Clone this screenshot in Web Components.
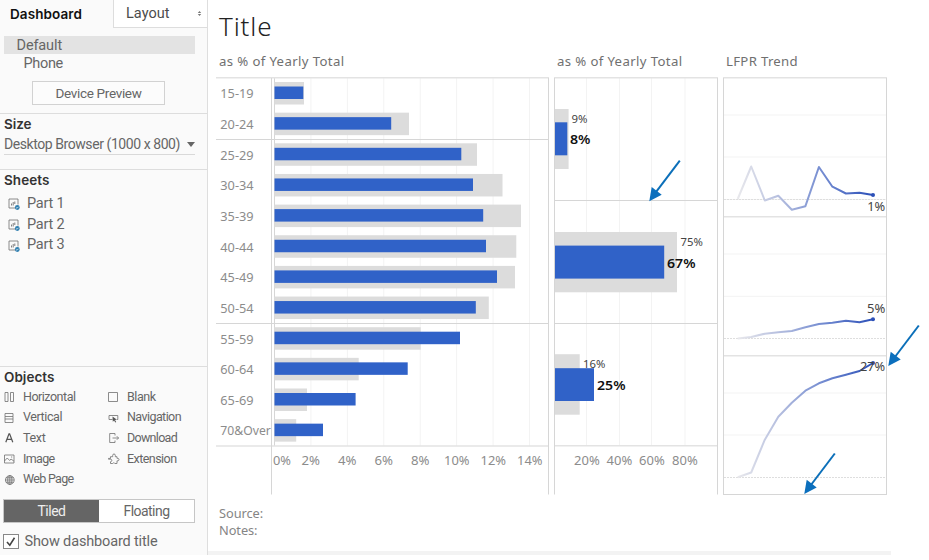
<!DOCTYPE html>
<html lang="en">
<head>
<meta charset="utf-8">
<title>Dashboard</title>
<style>
html,body{margin:0;width:929px;height:560px;overflow:hidden;background:#fff}
body{font-family:"Noto Sans","Open Sans",sans-serif;color:#555}
</style>
</head>
<body>
<dash-app></dash-app>
<script>
// Text that spreads its letters to fill the given width.
class FitText extends HTMLElement{
  connectedCallback(){
    const r=this.attachShadow({mode:'open'});
    r.innerHTML='<style>:host{display:inline-block;white-space:nowrap;line-height:1}span{display:inline-block}</style><span><slot></slot></span>';
    const w=+this.getAttribute('w'),s=r.querySelector('span'),n=this.textContent.length;
    if(w&&n){const d=(w-s.getBoundingClientRect().width)/n;s.style.letterSpacing=d.toFixed(3)+'px';this.style.width=w+'px';}
  }
}
customElements.define('fit-text',FitText);

const ICONS={
 horizontal:'<path d="M1 1.500h3v9H1zM6.500 1.500h3v9h-3z"/>',
 vertical:'<path d="M1 1.500h8v3H1zM1 7h8v3.500H1zM1 4.500v2.500M9 4.500v2.500"/>',
 text:'<path stroke-width="1.25" stroke="#555" d="M1.800 10.300L5 1.800h.6l3.200 8.500M3 7.300h4.600"/>',
 image:'<path d="M.5 2h9.500v8H.5zM.5 8l2.700-3 2.500 2.500L7 6l3 2.200M7 4h1.200"/>',
 web:'<circle cx="5.800" cy="6" r="4.400"/><ellipse cx="5.800" cy="6" rx="2.100" ry="4.400"/><path d="M1.400 6h8.800M2 3.800h7.600M2 8.200h7.600M5.800 1.500v9"/>',
 blank:'<path d="M.5 1.500h9v9h-9z"/>',
 nav:'<path d="M4.500 7.500H1v-4h8.800v4H8.700"/><path fill="#555" stroke="none" d="M4.500 4.600l4.200 3-1.700.4 1.200 1.900-.9.6-1.200-2-1.300 1.200z"/>',
 download:'<path d="M7 3.500v-2H1.700v9H7v-2M4.500 6h6M8.800 4.200L10.600 6 8.800 7.800"/>',
 extension:'<path d="M2.500 3.700h2.200V2.300a1.300 1.300 0 0 1 2.600 0v1.400H9v1.700h.8a1.200 1.200 0 0 1 0 2.400H9v2.700H6.900a1.200 1.200 0 0 0-2.200 0H2.500V8.700h.4a1.300 1.300 0 0 0 0-2.500H.5V5.400h2z"/>',
 sheet:'<path d="M8 10H1V1h9v5.500"/><path d="M3.500 5.500v2M5.200 4v3.500M6.800 3.500v2.500" stroke-width=".9"/><circle cx="9.300" cy="9.500" r="2.400" fill="#2f7fb0" stroke="none"/><path d="M8.200 9.500l.8.800 1.400-1.500" stroke="#fff" stroke-width=".7"/>'
};
class UiIcon extends HTMLElement{
  connectedCallback(){
    this.attachShadow({mode:'open'}).innerHTML=`<style>:host{display:block;width:12px;height:12px}svg{display:block;overflow:visible;fill:none;stroke:#707070;stroke-width:.8}</style><svg width="12" height="12" viewBox="0 0 12 12">${ICONS[this.getAttribute('name')]}</svg>`;
  }
}
customElements.define('ui-icon',UiIcon);

class SideBar extends HTMLElement{
  connectedCallback(){
    const item=([i,t,w])=>`<div class="item"><ui-icon name="${i}"></ui-icon><fit-text w="${w}">${t}</fit-text></div>`;
    this.attachShadow({mode:'open'}).innerHTML=`<style>
    :host{display:flex;flex-direction:column;box-sizing:border-box;width:208px;height:555px;background:#fafafa;border-right:1px solid #dedede;font-family:Roboto,"Noto Sans",sans-serif;font-size:14.500px;color:#666}
    *{box-sizing:border-box}
    .tabs{display:flex;height:28px;flex:none}
    .on{width:113px;padding:6px 0 0 10px;font:600 13.500px Inter,sans-serif;color:#111}
    .off{flex:1;background:#fff;border-left:1px solid #ddd;border-bottom:1px solid #ddd;display:flex;padding:7px 5px 0 12px;justify-content:space-between;color:#4c4c4c}
    .off svg{margin-top:3px}
    .dev{padding:8px 12px 0 4px;height:85px;flex:none}
    .sel{background:#e3e3e3;height:18px;padding:1px 0 0 12.500px}
    .ph{height:19px;padding:1px 0 0 19.500px}
    .btn{margin:8px 0 0 28px;width:133px;height:24px;border:1px solid #d2d2d2;background:#fcfcfc;display:flex;align-items:center;justify-content:center;padding-top:1px;font-size:13.500px}
    section{border-top:1px solid #ddd;padding:4px 12px 0 4px;flex:none}
    h3{margin:0;font:600 13.500px/1 Inter,sans-serif;color:#333;height:19px}
    .size{height:56px}
    .size h3{height:18px}
    .pick{display:flex;justify-content:space-between;height:19px;border-bottom:1px solid #d9d9d9;padding-top:1px;font-size:14px}
    .pick i{margin:5px 0 0;border:4px solid transparent;border-top:5px solid #666;border-bottom:0;height:5px}
    .sheets{height:197px}
    .sheet{display:flex;align-items:center;height:20.700px;padding-left:4px;gap:7px}
    .sheets h3{height:20px}
    .objects{height:132px;padding:4px 0 0 4px}
    .objects h3{height:15.500px}
    .grid{display:grid;grid-template-columns:104px 1fr;grid-auto-rows:20.700px;font-size:12.500px}
    .item{display:flex;align-items:center;gap:7px}
    .toggle{display:flex;margin:1px 12px 0 3px;height:24px;border:1px solid #c6c6c6;flex:none;font-size:14px}
    .toggle div{flex:1;display:flex;align-items:center;justify-content:center;background:#fff}
    .toggle .dark{background:#656565;color:#eee}
    .check{display:flex;align-items:center;gap:5.500px;padding:10px 0 0 3px}
    .check svg{display:block}
    .check fit-text{margin-top:2px}
    </style>
    <div class="tabs"><div class="on"><fit-text w="72">Dashboard</fit-text></div><div class="off"><fit-text w="43.500">Layout</fit-text><svg width="5" height="8" viewBox="0 0 5 8"><path d="M2.500 1L4.200 3H.8zM2.500 6L.8 4h3.400z" fill="#777"/></svg></div></div>
    <div class="dev"><div class="sel"><fit-text w="45.500">Default</fit-text></div><div class="ph"><fit-text w="39.500">Phone</fit-text></div><div class="btn"><fit-text w="86">Device Preview</fit-text></div></div>
    <section class="size"><h3><fit-text w="27.500">Size</fit-text></h3><div class="pick"><fit-text w="176">Desktop Browser (1000 x 800)</fit-text><i></i></div></section>
    <section class="sheets"><h3><fit-text w="45.500">Sheets</fit-text></h3>${[1,2,3].map(n=>`<div class="sheet"><ui-icon name="sheet"></ui-icon><fit-text w="37.500">Part ${n}</fit-text></div>`).join('')}</section>
    <section class="objects"><h3><fit-text w="50.500">Objects</fit-text></h3><div class="grid">${[['horizontal','Horizontal',52.5],['blank','Blank',28.5],['vertical','Vertical',39],['nav','Navigation',54],['text','Text',22.5],['download','Download',50],['image','Image',31.5],['extension','Extension',49.5],['web','Web Page',50.5]].map(item).join('')}</div></section>
    <div class="toggle"><div class="dark"><fit-text w="28">Tiled</fit-text></div><div><fit-text w="46">Floating</fit-text></div></div>
    <div class="check"><svg width="16" height="15"><rect x=".5" y=".5" width="15" height="14" fill="#fff" stroke="#888"/><path d="M4 8l2.800 3.200L11.500 3.800" fill="none" stroke="#444" stroke-width="1.600"/></svg><fit-text w="133">Show dashboard title</fit-text></div>`;
  }
}
customElements.define('side-bar',SideBar);

// Panel: heading above a plot whose coordinates share the canvas origin.
class ChartPanel extends HTMLElement{
  connectedCallback(){
    const x=+this.getAttribute('x'),w=+this.getAttribute('width');
    this.attachShadow({mode:'open'}).innerHTML=`<style>
    :host{display:block;width:${w}px;flex:none}
    header{height:24px;box-sizing:border-box;padding:1.500px 0 0 3px;font-size:13.200px;line-height:1;color:#707070}
    svg{display:block;overflow:visible}
    text{font-family:"Noto Sans","Open Sans",sans-serif;font-size:12.500px;fill:#8c8c8c}
    .b{stroke:#d6d6d6}.t{stroke:#e3e3e3;stroke-width:1.600}.g{stroke:#f3f3f3}
    .z{stroke:#dedede;stroke-dasharray:2 1}
    .gray{fill:#dcdcdc}.blue{fill:#3062c8}
    </style><header><fit-text w="${this.getAttribute('head-width')}">${this.getAttribute('heading')}</fit-text></header>
    <svg width="${w}" height="418" viewBox="${x} 77 ${w} 418">${this.plot()}</svg>`;
  }
}
const L=(c,a,b,d,e)=>`<path class="${c}" d="M${a} ${b}L${d} ${e}"/>`;
const R=(c,x1,y,x2,h)=>`<rect class="${c}" x="${x1}" y="${y}" width="${x2-x1}" height="${h}"/>`;
const T=(x,y,w,t,s='')=>`<text x="${x}" y="${y}" textLength="${w}" lengthAdjust="spacingAndGlyphs" style="${s}">${t}</text>`;

customElements.define('age-chart',class extends ChartPanel{
  plot(){
    const names=['15-19','20-24','25-29','30-34','35-39','40-44','45-49','50-54','55-59','60-64','65-69','70&amp;Over'];
    const g=[304,409,477,502.5,521,516.3,515,488.8,420.7,358.7,307,296.2];
    const b=[303.3,391.2,461.3,473,483.2,486,497,475.8,460,407.7,355.6,323];
    let o='';
    for(let i=1;i<8;i++)o+=L('g',274.5+i*36.43,78,274.5+i*36.43,446);
    o+=L('b',274.5,78,274.5,446);
    names.forEach((n,i)=>{const y=i*30.65;
      o+=R('gray',274.5,82+y,g[i],22.5)+R('blue',274.5,86.5+y,b[i],12.5)+T(220.3,98.300+y,i==11?50.5:33.3,n,'font-size:12.800px');});
    o+=L('t',216,77.8,549,77.8)+L('b',216,139.5,548,139.5)+L('b',216,323.5,548,323.5)+L('t',216,446,548,446)+L('b',271.5,78,271.5,494.5)+L('b',548.5,78,548.5,494.5);
    o+=[[273,18],[301.5,18.5],[338,18.5],[374.5,18.5],[411,18.5],[444,25.5],[480.5,25.5],[517,25.5]].map(([x,w],i)=>T(x,464.5,w,i*2+'%')).join('');
    return o;
  }
});
customElements.define('group-chart',class extends ChartPanel{
  plot(){
    let o=[586.5,619.5,651.5,685].map(x=>L('g',x,78,x,446)).join('');
    o+=R('gray',555,109,568.6,60)+R('blue',555,122.3,567.3,33)+R('gray',555,232,677,60.3)+R('blue',555,245.6,664.2,33)+R('gray',555,354.2,579.7,60.5)+R('blue',555,368.200,594,32.800);
    o+=L('t',554,77.8,718,77.8)+L('b',554,200.5,718,200.5)+L('b',554,323.5,718,323.5)+L('t',554,445.7,718,445.7)+L('b',554.5,78,554.5,494.5)+L('b',717.5,78,717.5,494.5);
    const s='font-size:10.800px;fill:#444',d='font-weight:600;font-size:13px;fill:#111';
    o+=T(571.5,122.500,16,'9%',s)+T(570,144.300,20.5,'8%',d)+T(680.5,245.700,22.3,'75%',s)+T(667,267.500,28.5,'67%',d)+T(583,368,22.3,'16%',s)+T(597,390,28.5,'25%',d);
    o+=[574,606.5,639,672].map((x,i)=>T(x,464.5,25.7,(i+1)*20+'%')).join('');
    return o;
  }
});
customElements.define('trend-chart',class extends ChartPanel{
  plot(){
    let o='<defs><linearGradient id="fade" gradientUnits="userSpaceOnUse" x1="738" x2="873" y1="0" y2="0"><stop stop-color="#e8e8ec"/><stop offset=".3" stop-color="#b6bfdf"/><stop offset=".65" stop-color="#6f88d0"/><stop offset="1" stop-color="#2c50b8"/></linearGradient></defs>';
    o+=[115,157,254,296.300,393,435].map(y=>L('g',724,y,886,y)).join('')+L('g',724,199.5,886,199.5);
    o+=[199.5,338.5,477.5].map(y=>L('z',724,y,886,y)).join('');
    o+=L('t',723,77.8,887,77.8)+L('t',723,216.7,887,216.7)+L('t',723,355.7,887,355.7)+L('b',723,494.5,887,494.5)+L('b',723.5,78,723.5,494.5)+L('b',886.5,78,886.5,494.5);
    for(const ys of [[199,166.5,200.5,195.7,209.7,206.2,167,186.7,193.5,192.7,195],[338.5,337,333.7,332.3,331,327.3,324,322.7,320.7,322.3,319.3],[477.3,472.5,439.7,416.7,402.7,390.7,383.3,378.3,374.7,371,363]])
      o+=`<polyline fill="none" stroke="url(#fade)" stroke-width="2" stroke-linejoin="round" points="${ys.map((y,i)=>(737.7+i*13.53).toFixed(1)+','+y).join(' ')}"/><circle cx="873" cy="${ys[10]}" r="2" fill="#2c50b8"/>`;
    const s='fill:#444';
    return o+T(867.2,211.200,18,'1%',s)+T(867,313,18.3,'5%',s)+T(860,370.800,25.2,'27%',s);
  }
});

// Callout arrows drawn over the canvas.
customElements.define('arrow-marks',class extends HTMLElement{
  connectedCallback(){
    const a=(x,y)=>`<g transform="translate(${x} ${y})"><path d="M30.500-40.500L7-9.500" stroke="#0b6fb9" stroke-width="2"/><path d="M0 0L2.400-14.300 12.400-6.500z" fill="#0b6fbd"/></g>`;
    this.attachShadow({mode:'open'}).innerHTML=`<style>:host{display:block;position:absolute;left:0;top:0}svg{display:block}</style><svg width="929" height="560">${a(649.3,201.2)+a(888.3,366)+a(804.3,494)}</svg>`;
  }
});
customElements.define('dash-app',class extends HTMLElement{
  connectedCallback(){
    this.attachShadow({mode:'open'}).innerHTML=`<style>
    :host{display:grid;grid-template-columns:208px 1fr;height:560px;position:relative}
    main{display:flex;flex-direction:column;padding-left:8px}
    h1{margin:0;height:53px;box-sizing:border-box;padding:13px 0 0 3px;font:300 26px/1 "Noto Sans","Open Sans",sans-serif;color:#222}
    .row{display:flex;gap:5px;height:442px}
    footer{font-size:12.800px;line-height:17.500px;color:#858585;padding:10px 0 0 3px;height:56px;box-sizing:border-box}
    footer div{height:17.300px}
    .strip{height:4px;width:683px;margin-left:-8px;background:#f3f3f3}
    </style><side-bar></side-bar><main><h1><fit-text w="53.500">Title</fit-text></h1>
    <div class="row"><age-chart x="216" width="333" heading="as % of Yearly Total" head-width="125.500"></age-chart><group-chart x="554" width="164" heading="as % of Yearly Total" head-width="125.500"></group-chart><trend-chart x="723" width="164" heading="LFPR Trend" head-width="72"></trend-chart></div>
    <footer><div><fit-text w="44">Source:</fit-text></div><div><fit-text w="38.500">Notes:</fit-text></div></footer><div class="strip"></div></main><arrow-marks></arrow-marks>`;
  }
});
</script>
</body>
</html>
